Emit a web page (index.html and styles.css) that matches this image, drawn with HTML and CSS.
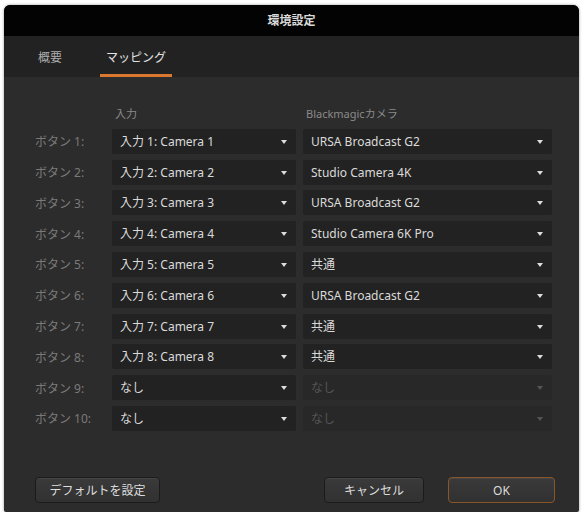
FILE: index.html
```html
<!DOCTYPE html>
<html lang="ja">
<head>
    <meta charset="UTF-8">
    <meta name="viewport" content="width=device-width, initial-scale=1.0">
    <title>環境設定</title>
    <link rel="stylesheet" href="styles.css">
</head>
<body>
    <div class="dialog">
        <div class="titlebar">環境設定</div>
        <div class="tabs">
            <span class="tab">概要</span>
            <span class="tab active">マッピング</span>
        </div>
        <div class="content">
            <div class="mapping">
                <span></span>
                <span class="colhead">入力</span>
                <span class="colhead">Blackmagicカメラ</span>

                <span class="label">ボタン 1:</span>
                <div class="select">入力 1: Camera 1</div>
                <div class="select">URSA Broadcast G2</div>

                <span class="label">ボタン 2:</span>
                <div class="select">入力 2: Camera 2</div>
                <div class="select">Studio Camera 4K</div>

                <span class="label">ボタン 3:</span>
                <div class="select">入力 3: Camera 3</div>
                <div class="select">URSA Broadcast G2</div>

                <span class="label">ボタン 4:</span>
                <div class="select">入力 4: Camera 4</div>
                <div class="select">Studio Camera 6K Pro</div>

                <span class="label">ボタン 5:</span>
                <div class="select">入力 5: Camera 5</div>
                <div class="select">共通</div>

                <span class="label">ボタン 6:</span>
                <div class="select">入力 6: Camera 6</div>
                <div class="select">URSA Broadcast G2</div>

                <span class="label">ボタン 7:</span>
                <div class="select">入力 7: Camera 7</div>
                <div class="select">共通</div>

                <span class="label">ボタン 8:</span>
                <div class="select">入力 8: Camera 8</div>
                <div class="select">共通</div>

                <span class="label">ボタン 9:</span>
                <div class="select">なし</div>
                <div class="select disabled">なし</div>

                <span class="label">ボタン 10:</span>
                <div class="select">なし</div>
                <div class="select disabled">なし</div>
            </div>
            <div class="footer">
                <button class="btn btn-default">デフォルトを設定</button>
                <span class="spacer"></span>
                <button class="btn btn-cancel">キャンセル</button>
                <button class="btn btn-ok">OK</button>
            </div>
        </div>
    </div>
</body>
</html>
```

FILE: styles.css
```css
* {
    box-sizing: border-box;
}
body {
    margin: 0;
    background-color: #fff;
    font-family: 'Noto Sans', 'Noto Sans CJK JP', sans-serif;
    color: #ddd;
}
.dialog {
    margin: 5px 5px 0 4px;
    width: 575px;
    height: 507px;
    background-color: #2c2c2c;
    border-radius: 6px 6px 2px 2px;
    overflow: hidden;
    display: flex;
    flex-direction: column;
    box-shadow: 0 0 3px rgba(0, 0, 0, 0.4);
}
.titlebar {
    height: 31px;
    background-color: #030303;
    text-align: center;
    font-size: 12px;
    font-weight: bold;
    line-height: 31px;
    color: #d8d8d8;
}
.tabs {
    height: 41px;
    background-color: #222;
    display: flex;
    align-items: flex-end;
    padding-left: 28px;
    gap: 32px;
}
.tab {
    font-size: 12px;
    color: #adadad;
    padding: 0 6px;
    height: 28px;
    line-height: 18px;
    border-bottom: 3px solid transparent;
}
.tab.active {
    color: #e4e4e4;
    border-bottom-color: #d9782e;
}
.content {
    flex: 1;
    display: flex;
    flex-direction: column;
    padding: 29px 24px 9px 31px;
}
.mapping {
    display: grid;
    grid-template-columns: 70px 184px 249px;
    grid-auto-rows: 25px;
    grid-template-rows: 17px;
    column-gap: 7px;
    row-gap: 5.8px;
    align-items: center;
}
.colhead {
    align-self: start;
    font-size: 11px;
    line-height: 15px;
    color: #8a8a8a;
    padding-left: 3px;
}
.label {
    font-size: 12px;
    color: #7a7a7a;
    white-space: nowrap;
}
.select {
    position: relative;
    height: 25px;
    line-height: 25px;
    padding-left: 8px;
    font-size: 12px;
    color: #dadada;
    background-color: #222;
    border-radius: 2px;
}
.select::after {
    content: "";
    position: absolute;
    right: 9px;
    top: 11px;
    border-left: 3.5px solid transparent;
    border-right: 3.5px solid transparent;
    border-top: 4px solid #ddd;
}
.select.disabled {
    color: #555;
    background-color: #282828;
}
.select.disabled::after {
    border-top-color: #555;
}
.footer {
    margin-top: auto;
    display: flex;
    align-items: center;
}
.spacer {
    flex: 1;
}
.btn {
    height: 26px;
    font-family: inherit;
    font-size: 12px;
    color: #ddd;
    background: linear-gradient(#3a3a3a, #313131);
    border: 1px solid #1b1b1b;
    border-radius: 4px;
    box-shadow: inset 0 1px 0 rgba(255, 255, 255, 0.06);
}
.btn-default {
    width: 125px;
}
.btn-cancel {
    width: 100px;
}
.btn-ok {
    width: 107px;
    margin-left: 24px;
    border: 1px solid #8a5628;
}
```
